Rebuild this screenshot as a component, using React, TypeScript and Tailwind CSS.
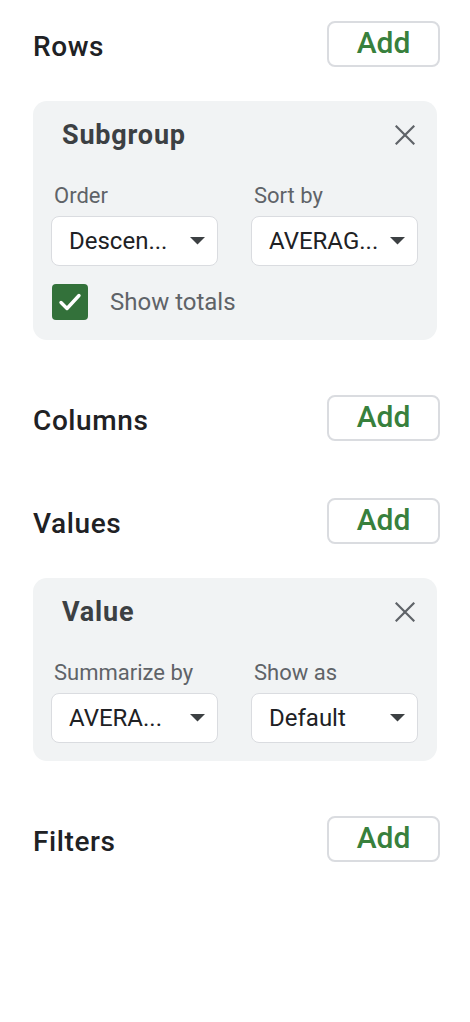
import React from "react";

const font = { fontFamily: "Roboto, 'Noto Sans', sans-serif" };

function AddButton() {
  return (
    <button className="w-[113px] h-[46px] rounded-[8px] border-2 border-[#dadce0] bg-white text-[30px] font-medium text-[#38803c] leading-none flex items-center justify-center pb-[2px]">
      Add
    </button>
  );
}

function Section({ title }: { title: string }) {
  return (
    <div className="flex items-center justify-between pr-[30px]">
      <div className="text-[28px] font-medium text-[#202124] leading-none pt-[5px] tracking-[0.6px]">{title}</div>
      <AddButton />
    </div>
  );
}

function Close() {
  return (
    <svg width="20" height="20" viewBox="0 0 20 20" className="mr-[3px]">
      <path d="M1.5 1.5 L18.5 18.5 M18.5 1.5 L1.5 18.5" stroke="#5f6368" strokeWidth="2.2" strokeLinecap="square" />
    </svg>
  );
}

function Dropdown({ label, value }: { label: string; value: string }) {
  return (
    <div className="flex flex-col">
      <div className="h-[24px] text-[22px] leading-[24px] text-[#5f6368] pl-[3px] whitespace-nowrap">{label}</div>
      <div className="mt-[8px] h-[50px] rounded-[8px] border-[1.5px] border-[#dadce0] bg-white flex items-center justify-between pl-[17px] pr-[12px]">
        <span className="text-[24px] text-[#202124] whitespace-nowrap">{value}</span>
        <svg width="15" height="8" viewBox="0 0 15 8">
          <path d="M0 0 L15 0 L7.5 7.5 Z" fill="#3c4043" />
        </svg>
      </div>
    </div>
  );
}

function Card({ title, children }: { title: string; children: React.ReactNode }) {
  return (
    <div className="mr-[33px] rounded-[14px] bg-[#f1f3f4] pt-[15px] pl-[18px] pr-[19px]">
      <div className="h-[38px] flex items-center justify-between pl-[11px]">
        <div className="text-[27px] font-bold text-[#3c4043] leading-none tracking-[0.8px]">{title}</div>
        <Close />
      </div>
      {children}
    </div>
  );
}

export default function App() {
  return (
    <div style={font} className="w-[470px] h-[1022px] bg-white pl-[33px] pt-[21px]">
      <Section title="Rows" />
      <div className="mt-[34px]">
        <Card title="Subgroup">
          <div className="mt-[30px] grid grid-cols-2 gap-[33px]">
            <Dropdown label="Order" value="Descen..." />
            <Dropdown label="Sort by" value="AVERAG..." />
          </div>
          <div className="mt-[18px] pb-[20px] flex items-center">
            <div className="ml-[1px] w-[36px] h-[36px] rounded-[4px] bg-[#33713a] flex items-center justify-center">
              <svg width="24" height="20" viewBox="0 0 24 20">
                <path d="M3 10.5 L9 16.5 L21 3.5" fill="none" stroke="white" strokeWidth="3.4" strokeLinecap="round" strokeLinejoin="round" />
              </svg>
            </div>
            <span className="ml-[22px] text-[24px] text-[#5f6368]">Show totals</span>
          </div>
        </Card>
      </div>
      <div className="mt-[55px]">
        <Section title="Columns" />
      </div>
      <div className="mt-[57px]">
        <Section title="Values" />
      </div>
      <div className="mt-[34px]">
        <Card title="Value">
          <div className="mt-[30px] pb-[18px] grid grid-cols-2 gap-[33px]">
            <Dropdown label="Summarize by" value="AVERA..." />
            <Dropdown label="Show as" value="Default" />
          </div>
        </Card>
      </div>
      <div className="mt-[55px]">
        <Section title="Filters" />
      </div>
    </div>
  );
}
